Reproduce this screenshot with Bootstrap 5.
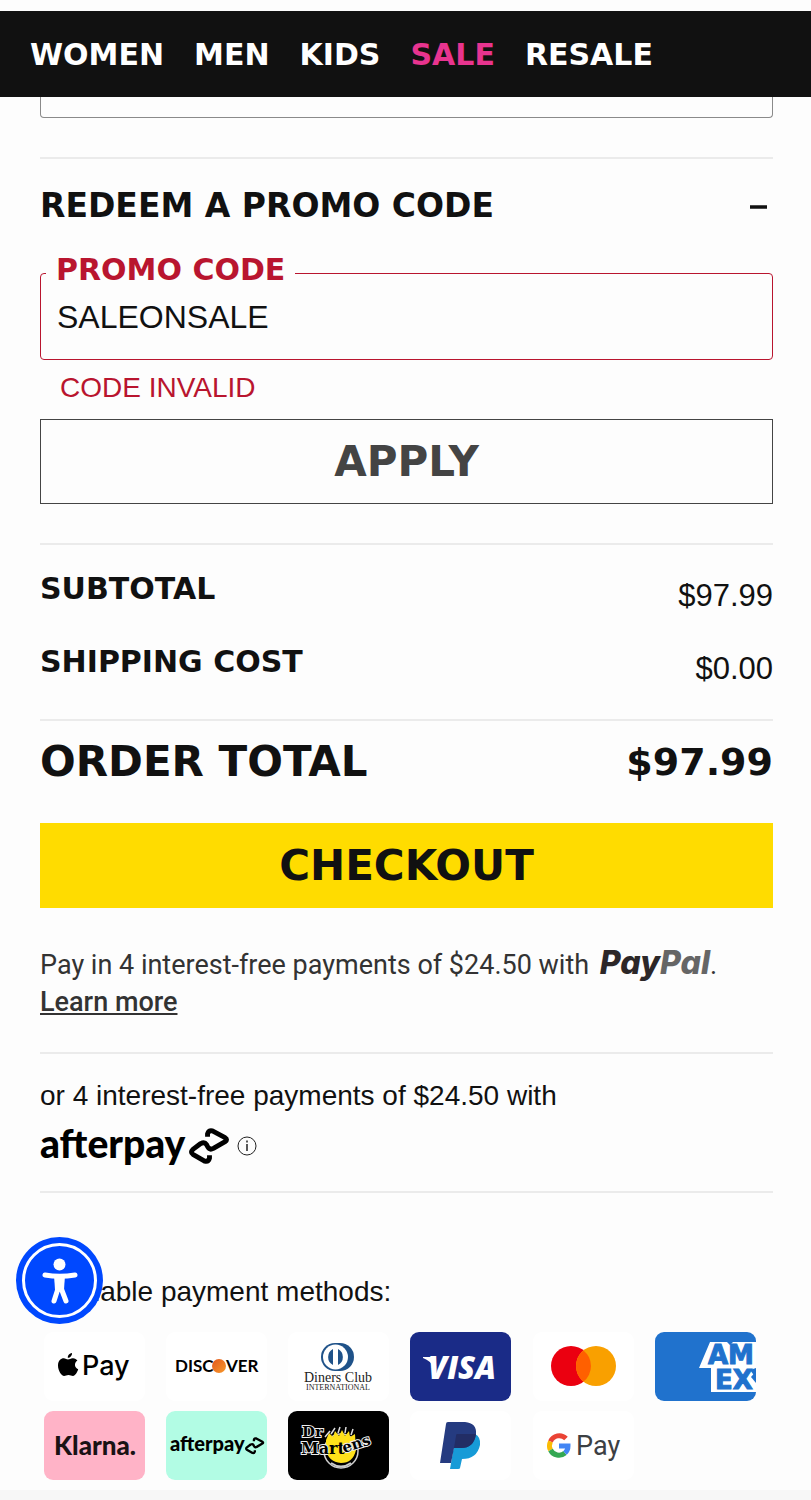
<!DOCTYPE html>
<html lang="en">
<head>
<meta charset="utf-8">
<meta name="viewport" content="width=device-width, initial-scale=1">
<title>Your bag</title>
<link href="https://cdn.jsdelivr.net/npm/bootstrap@5.3.0/dist/css/bootstrap.min.css" rel="stylesheet">
<style>
  body { background: #fdfdfd; color: #111; font-family: "Liberation Sans", Arial, sans-serif; font-size: 28px; line-height: 36px; }
  .wide { font-family: "DejaVu Sans", Verdana, sans-serif; font-weight: 700; }
  .topnav { background: #111; margin-top: 11px; height: 86px; padding: 2px 30px 0; gap: 30px; font-size: 30px; }
  .topnav a { color: #fff; text-decoration: none; }
  .topnav a.hot { color: #e8348f; }
  main { padding: 0 38px 10px 40px; }
  .rule { height: 2px; margin: 0; border: 0; opacity: 1; background: #ebebeb; }
  .prev-field { display: block; width: 100%; height: 21px; border: 1px solid #8a8a8a; border-top: 0; border-radius: 0 0 4px 4px; background: transparent; margin-bottom: 39px; }
  .toggle { height: 92px; font-size: 33px; padding: 2px 0 0; border: 0; background: none; color: #111; margin-bottom: 22px; }
  .toggle svg { margin-right: 5px; }
  .promo-box { position: relative; }
  .promo-box label { position: absolute; left: 6px; top: -21px; padding: 0 10px; line-height: 36px; font-size: 30px; background: #fdfdfd; color: #b9152f; }
  .promo-box input { display: block; width: 100%; height: 87px; border: 1px solid #b9152f; border-radius: 4px; padding: 2px 16px 0; font-size: 32px; color: #111; background: transparent; }
  .error-text { color: #b9152f; line-height: 56px; padding: 0 20px 3px; }
  .big-btn { height: 85px; border-radius: 0; font-size: 42px; line-height: 80px; padding: 0; }
  .btn-apply { border: 1px solid #444; color: #444; background: transparent; margin-bottom: 39px; }
  .btn-checkout { background: #ffdc00; color: #111; border: 0; }
  .costs { padding: 14px 0; }
  .cost { height: 73px; }
  .cost dt { line-height: 60px; font-size: 30px; }
  .cost dd { line-height: 73px; font-size: 31px; margin: 0; }
  .total { line-height: 82px; font-size: 42px; margin-bottom: 22px; height: 80px; }
  .total .sum { font-size: 38px; }
  .paypal-note { font-family: Roboto, sans-serif; font-size: 27px; line-height: 37px; color: #333; margin: 39px 0 31px; }
  .paypal-note a { color: #333; font-weight: 500; }
  .pp { font-family: Inter, sans-serif; font-weight: 800; font-style: italic; font-size: 32px; line-height: 30px; color: #2c2728; margin-left: 4px; }
  .pp span { color: #666; }
  .ap-row { height: 64px; }
  .ap-word { font-family: Lato, sans-serif; font-weight: 900; font-size: 39px; color: #000; padding-bottom: 6px; }
  .ap-row + .rule { margin-top: 13px; }
  .pay-section { margin-top: 81px; position: relative; }
  .pay-grid { row-gap: 10px; margin-top: 22px; }
  .pay-grid svg { display: block; width: 101px; height: 69px; margin-left: 4px; border-radius: 9px; }
  .a11y { position: absolute; left: -24px; top: -37px; width: 87px; height: 87px; border: 0; padding: 0; background: none; }
  .info { border: 0; padding: 0; background: none; line-height: 0; margin-left: 8px; }
  .page-end { height: 10px; background: #f7f7f7; }
</style>
</head>
<body>
<nav class="topnav wide d-flex align-items-center" aria-label="Main">
  <a href="#">WOMEN</a><a href="#">MEN</a><a href="#">KIDS</a><a href="#" class="hot">SALE</a><a href="#">RESALE</a>
</nav>
<main>
  <input class="prev-field" type="text" aria-label="Delivery option">
  <hr class="rule">
  <button type="button" class="toggle wide w-100 d-flex align-items-center justify-content-between" aria-expanded="true">
    REDEEM A PROMO CODE
    <svg width="19" height="12" viewBox="0 0 19 12" aria-hidden="true"><path d="M1 7h17" stroke="#111" stroke-width="3.5"/></svg>
  </button>
  <div class="promo-box">
    <input id="promo" type="text" value="SALEONSALE">
    <label for="promo" class="wide">PROMO CODE</label>
  </div>
  <div class="error-text">CODE INVALID</div>
  <button type="button" class="btn btn-apply big-btn wide w-100">APPLY</button>
  <hr class="rule">
  <dl class="costs mb-0">
    <div class="cost d-flex justify-content-between"><dt class="wide">SUBTOTAL</dt><dd>$97.99</dd></div>
    <div class="cost d-flex justify-content-between"><dt class="wide">SHIPPING COST</dt><dd>$0.00</dd></div>
  </dl>
  <hr class="rule">
  <div class="total wide d-flex justify-content-between"><span>ORDER TOTAL</span><span class="sum">$97.99</span></div>
  <button type="button" class="btn btn-checkout big-btn wide w-100">CHECKOUT</button>
  <p class="paypal-note">Pay in 4 interest-free payments of $24.50 with <span class="pp">Pay<span>Pal</span></span>.<br><a href="#">Learn more</a></p>
  <hr class="rule">
  <p class="mb-0 pt-4">or 4 interest-free payments of $24.50 with</p>
  <div class="ap-row d-flex align-items-center">
    <span class="ap-word">afterpay</span>
    <svg class="ms-1" width="40" height="38" viewBox="0 0 41 37" fill="none" stroke="#000" stroke-width="5" stroke-linejoin="round" aria-hidden="true"><path d="M19 9V6q1-4 5-3l13 7q3 2 0 4L25 21q-4 2-6-2l-1-2q-2-3-6-1L4 22q-3 3 0 5l12 7q4 1 5-3v-3"/></svg>
    <button type="button" class="info" aria-label="More information"><svg width="20" height="20" viewBox="0 0 20 20" fill="none" stroke="#222" aria-hidden="true"><circle cx="10" cy="10" r="9"/><path d="M10 8v7M10 4.500v2" stroke-width="1.500"/></svg></button>
  </div>
  <hr class="rule">
  <section class="pay-section">
    <div>Available payment methods:</div>
    <div class="row g-0 pay-grid">
      <div class="col-2"><svg viewBox="0 0 101 69" role="img" aria-label="Apple Pay"><rect width="101" height="69" fill="#fff"/><path transform="translate(14 21)" d="M10 6.500c1.500 0 3-1.500 5-1.300 2 .1 3.500 1 4.400 2.400-3.700 2.400-3 7.300.8 8.700-1 3-3 6.700-5.200 6.700-1.700 0-2.400-1-4.500-1s-2.800 1-4.400 1C3.500 23 0 17.500 0 12.500c0-5 3-7.300 5.700-7.300 1.800 0 3 1.300 4.300 1.300zM9.800 4.800C9.600 2.500 11.700.2 14 0c.3 2.500-1.900 4.900-4.200 4.800z"/><text x="38" y="43" font-family="Inter" font-weight="500" font-size="27">Pay</text></svg></div>
      <div class="col-2"><svg viewBox="0 0 101 69" role="img" aria-label="Discover"><defs><linearGradient id="dg" x1="0" y1="0" x2="1" y2="1"><stop offset="0" stop-color="#e2571d"/><stop offset="1" stop-color="#f79a2b"/></linearGradient></defs><rect width="101" height="69" fill="#fff"/><g font-family="Lato" font-weight="700" font-size="17"><text x="9" y="40">DISC</text><text x="60" y="40">VER</text></g><circle cx="53" cy="34" r="7" fill="url(#dg)"/></svg></div>
      <div class="col-2"><svg viewBox="0 0 101 69" role="img" aria-label="Diners Club International"><rect width="101" height="69" fill="#fff"/><path d="M47 11h5a14 14 0 0 1 0 28h-5a14 14 0 0 1 0-28z" fill="#1f5289"/><circle cx="47.500" cy="25" r="12.500" fill="#fff"/><path d="M45 17v16a9 9 0 0 1 0-16zM50 17v16a9 9 0 0 0 0-16z" fill="#1f5289"/><g font-family="Liberation Serif" text-anchor="middle" fill="#222"><text x="50" y="50" font-size="14">Diners Club</text><text x="50" y="58" font-size="8">INTERNATIONAL</text></g></svg></div>
      <div class="col-2"><svg viewBox="0 0 101 69" role="img" aria-label="Visa"><rect width="101" height="69" fill="#1a2b87"/><path d="M13 25h9l4 9-3 1q-2-6-10-9z" fill="#fff"/><text x="18" y="47" font-family="Open Sans" font-weight="800" font-style="italic" font-size="31" fill="#fff">VISA</text></svg></div>
      <div class="col-2"><svg viewBox="0 0 101 69" role="img" aria-label="Mastercard"><rect width="101" height="69" fill="#fff"/><circle cx="38" cy="34" r="20" fill="#eb0010"/><circle cx="63" cy="34" r="20" fill="#f9a000"/><path d="M50.500 18.400a20 20 0 0 1 0 31.200a20 20 0 0 1 0-31.200z" fill="#ff6000"/></svg></div>
      <div class="col-2"><svg viewBox="0 0 101 69" role="img" aria-label="American Express"><rect width="101" height="69" fill="#2072cd"/><path d="M44 36L55 10h17l3 3 3-3h23v26l-6 2 6 8v14H56V36z" fill="#fff"/><path d="M101 39v12l-5-6z" fill="#2072cd"/><text font-family="DejaVu Sans" font-weight="700" fill="#2072cd" font-size="26" stroke="#2072cd"><tspan x="53" y="32">AM</tspan><tspan x="60" y="57">EX</tspan></text></svg></div>
      <div class="col-2"><svg viewBox="0 0 101 69" role="img" aria-label="Klarna"><rect width="101" height="69" fill="#ffb3c7"/><text x="10" y="44" font-family="Lato" font-weight="900" font-size="26" fill="#1a1214">Klarna.</text></svg></div>
      <div class="col-2"><svg viewBox="0 0 101 69" role="img" aria-label="Afterpay"><rect width="101" height="69" fill="#b2fce4"/><text x="4" y="40" font-family="Lato" font-weight="900" font-size="20">afterpay</text><path transform="translate(79 26) scale(.47)" fill="none" stroke="#000" stroke-width="5" stroke-linejoin="round" d="M19 9V6q1-4 5-3l13 7q3 2 0 4L25 21q-4 2-6-2l-1-2q-2-3-6-1L4 22q-3 3 0 5l12 7q4 1 5-3v-3"/></svg></div>
      <div class="col-2"><svg viewBox="0 0 101 69" role="img" aria-label="Dr. Martens"><rect width="101" height="69"/><circle cx="53" cy="40" r="17" fill="#000" stroke="#ccc" stroke-width="1.500"/><path d="M38 29l3-7 4 4 2-6 4 5 3-6 3 6 4-5 1 6 5-3 1 16q-3 13-15 13-13-1-15-14z" fill="#ffe11a"/><path d="M37 26l5-6M43 23l4-6M50 22l2-6M57 22l1-6M63 24l2-6" stroke="#ddd" stroke-width="1.500"/><path d="M43 52q10 7 20 0" fill="none" stroke="#ccc" stroke-width="2"/><g font-family="DejaVu Serif" font-weight="700" fill="#000" stroke="#eee" stroke-width="2" paint-order="stroke"><text x="14" y="26" font-size="15">Dr</text><text x="13" y="43" font-size="16">Ma<tspan stroke="#ffe11a">rt</tspan></text><text x="56" y="42" font-size="15" transform="rotate(-18 56 42)">ens</text></g></svg></div>
      <div class="col-2"><svg viewBox="0 0 101 69" role="img" aria-label="PayPal"><rect width="101" height="69" fill="#fff"/><path d="M46 23h19q6 3 5 11-3 14-18 14l-2 9q0 1-2 1h-8z" fill="#179bd7"/><path d="M38 11h17q12 1 11 12-2 14-15 14h-7l-3 15H30l6-39q0-2 2-2z" fill="#253b80"/><path d="M47 23h19q-2 14-15 14h-7l2-12q0-2 1-2z" fill="#222d65"/></svg></div>
      <div class="col-2"><svg viewBox="0 0 101 69" role="img" aria-label="Google Pay"><rect width="101" height="69" fill="#fff"/><g fill="none" stroke-width="5"><path d="M33 27.500A9.500 9.500 0 0 0 17.500 30.500" stroke="#ea4335"/><path d="M17.500 30.500a9.500 9.500 0 0 0 0 8.500" stroke="#fbbc04"/><path d="M17.500 39a9.500 9.500 0 0 0 14.500 3" stroke="#34a853"/><path d="M32 42a9.500 9.500 0 0 0 3-7H26" stroke="#4285f4"/></g><text x="43" y="44" font-family="Roboto" font-size="27" fill="#3c4043">Pay</text></svg></div>
    </div>
    <button type="button" class="a11y" aria-label="Accessibility options"><svg width="87" height="87" viewBox="0 0 87 87" aria-hidden="true"><circle cx="43.500" cy="43.500" r="43.500" fill="#0048ff"/><circle cx="43.500" cy="43.500" r="36" fill="none" stroke="#fff" stroke-width="3"/><circle cx="43.500" cy="27.500" r="6" fill="#fff"/><path d="M29 38q14.500 2.500 30 0M38 64l5.500-17L50 64" fill="none" stroke="#fff" stroke-width="5" stroke-linecap="round" stroke-linejoin="round"/><path d="M38 38h11l-1 15h-9z" fill="#fff"/></svg></button>
  </section>
</main>
<div class="page-end"></div>
<script src="https://cdn.jsdelivr.net/npm/bootstrap@5.3.0/dist/js/bootstrap.bundle.min.js"></script>
</body>
</html>
